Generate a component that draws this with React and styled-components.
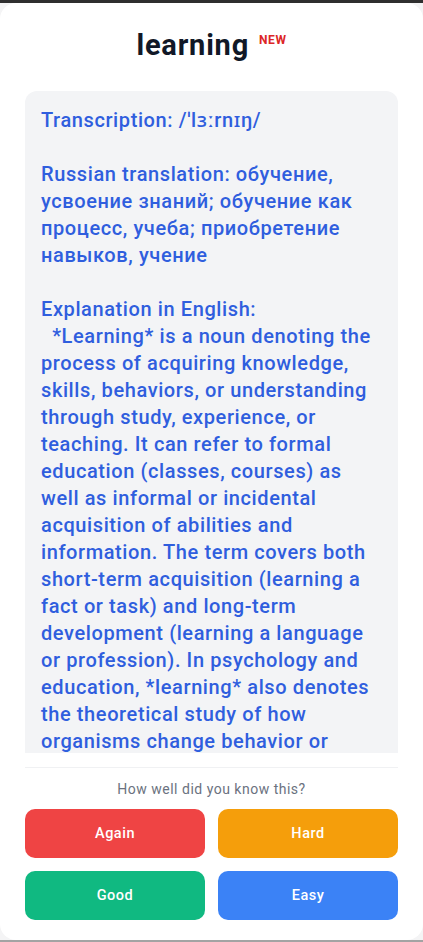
import React from 'react';
import styled, { createGlobalStyle } from 'styled-components';

const GlobalStyle = createGlobalStyle`
  html, body {
    margin: 0;
    padding: 0;
    background: #f4f4f5;
  }
  * {
    box-sizing: border-box;
  }
`;

const Page = styled.div`
  display: flex;
  flex-direction: column;
  height: 942px;
  border-top: 3px solid #2f2f2f;
  border-bottom: 2px solid #a3a3a3;
  font-family: Roboto, "Noto Sans", sans-serif;
`;

const Card = styled.main`
  flex: 1;
  min-height: 0;
  display: flex;
  flex-direction: column;
  background: #fff;
  border-radius: 16px;
`;

const Header = styled.header`
  display: flex;
  justify-content: center;
  align-items: flex-start;
  gap: 10px;
  padding: 24px 25px 28px;
`;

const Word = styled.h1`
  margin: 0;
  font-size: 29px;
  line-height: 36px;
  font-weight: 700;
  letter-spacing: 0.8px;
  color: #111827;
`;

const Badge = styled.span`
  margin-top: 6px;
  font-size: 12px;
  font-weight: 700;
  color: #dc2626;
  letter-spacing: 0.6px;
`;

const Scroll = styled.section`
  flex: 1;
  min-height: 0;
  overflow: hidden;
  margin: 0 25px;
`;

const Body = styled.div`
  background: #f3f4f6;
  border-radius: 12px 12px 0 0;
  padding: 16px 16px 24px;
  color: #2f5ede;
  font-size: 20px;
  line-height: 27px;
  font-weight: 500;
  letter-spacing: 0.6px;
  white-space: pre-wrap;
`;

const Footer = styled.footer`
  margin: 14px 25px 0;
  padding: 11px 0 20px;
  border-top: 1px solid #f0f1f3;
`;

const Prompt = styled.p`
  margin: 0 0 10px;
  text-align: center;
  font-size: 14px;
  line-height: 20px;
  letter-spacing: 0.5px;
  color: #6b7280;
`;

const Grid = styled.div`
  display: grid;
  grid-template-columns: 1fr 1fr;
  gap: 13px;
`;

const Rate = styled.button`
  height: 49px;
  border: none;
  border-radius: 10px;
  background: ${p => p.$color};
  color: #fff;
  font-family: inherit;
  font-size: 14.5px;
  font-weight: 500;
  letter-spacing: 0.5px;
  cursor: pointer;
`;

const text = `Transcription: /ˈlɜːrnɪŋ/

Russian translation: обучение, усвоение знаний; обучение как процесс, учеба; приобретение навыков, учение

Explanation in English:
  *Learning* is a noun denoting the process of acquiring knowledge, skills, behaviors, or understanding through study, experience, or teaching. It can refer to formal education (classes, courses) as well as informal or incidental acquisition of abilities and information. The term covers both short-term acquisition (learning a fact or task) and long-term development (learning a language or profession). In psychology and education, *learning* also denotes the theoretical study of how organisms change behavior or knowledge as a result of experience.`;

const ratings = [
  { label: 'Again', color: '#ef4444' },
  { label: 'Hard', color: '#f59e0b' },
  { label: 'Good', color: '#10b981' },
  { label: 'Easy', color: '#3b82f6' },
];

const App = () => (
  <>
    <GlobalStyle />
    <Page>
      <Card>
        <Header>
          <Word>learning</Word>
          <Badge>NEW</Badge>
        </Header>
        <Scroll>
          <Body>{text}</Body>
        </Scroll>
        <Footer>
          <Prompt>How well did you know this?</Prompt>
          <Grid>
            {ratings.map(r => (
              <Rate key={r.label} $color={r.color}>{r.label}</Rate>
            ))}
          </Grid>
        </Footer>
      </Card>
    </Page>
  </>
);

export default App;
